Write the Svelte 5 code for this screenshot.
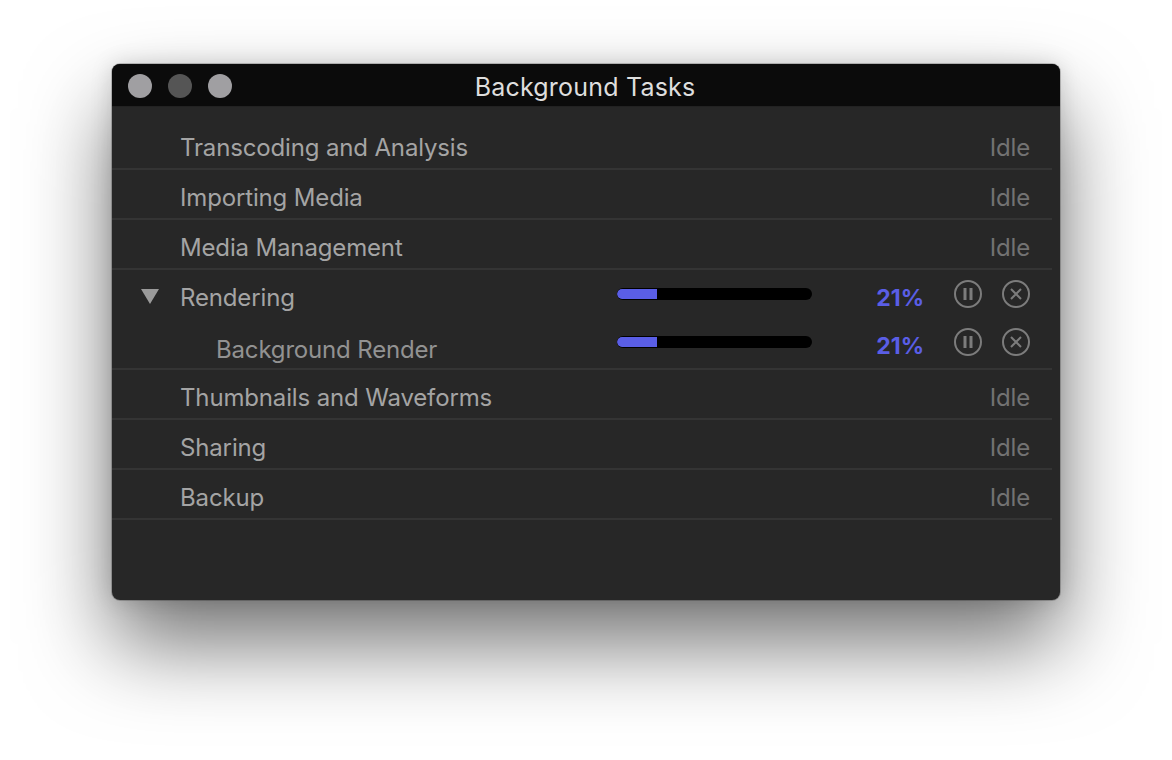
<script>
	const before = ['Transcoding and Analysis', 'Importing Media', 'Media Management'];
	const after = ['Thumbnails and Waveforms', 'Sharing', 'Backup'];
	const percent = 21;
</script>

{#snippet controls()}
	<div class="bar"><div class="fill" style="width: {percent * 1.9}px"></div></div>
	<span class="percent">{percent}%</span>
	<svg class="icon" viewBox="0 0 28 28" width="28" height="28">
		<circle cx="14" cy="14" r="13" fill="none" stroke="#7c7c7c" stroke-width="2" />
		<rect x="9.5" y="8" width="3" height="12" fill="#7c7c7c" />
		<rect x="15.5" y="8" width="3" height="12" fill="#7c7c7c" />
	</svg>
	<svg class="icon" viewBox="0 0 28 28" width="28" height="28">
		<circle cx="14" cy="14" r="13" fill="none" stroke="#7c7c7c" stroke-width="2" />
		<path d="M9 9 L19 19 M19 9 L9 19" stroke="#7c7c7c" stroke-width="2" fill="none" />
	</svg>
{/snippet}

{#snippet idleRow(label)}
	<div class="row">
		<span class="label">{label}</span>
		<span class="idle">Idle</span>
	</div>
{/snippet}

<div class="page">
	<div class="window">
		<div class="titlebar">
			<div class="lights">
				<span class="light"></span>
				<span class="light dim"></span>
				<span class="light"></span>
			</div>
			<div class="title">Background Tasks</div>
		</div>
		<div class="list">
			{#each before as label}
				{@render idleRow(label)}
			{/each}
			<div class="group">
				<div class="sub first">
					<span class="triangle"></span>
					<span class="label">Rendering</span>
					<div class="controls">{@render controls()}</div>
				</div>
				<div class="sub second">
					<span class="label child">Background Render</span>
					<div class="controls">{@render controls()}</div>
				</div>
			</div>
			{#each after as label}
				{@render idleRow(label)}
			{/each}
		</div>
	</div>
</div>

<style>
	:global(body) {
		background: #fff;
		overflow: hidden;
	}

	.page {
		height: 760px;
		padding: 64px 0 0 112px;
		box-sizing: border-box;
		font-family: Inter, "Liberation Sans", sans-serif;
	}

	.window {
		width: 948px;
		height: 536px;
		background: #272727;
		border-radius: 8px;
		overflow: hidden;
		box-shadow: 0 0 0 1px rgba(0, 0, 0, 0.2), 0 44px 85px rgba(0, 0, 0, 0.55), 0 0 22px rgba(0, 0, 0, 0.15);
	}

	.titlebar {
		height: 43px;
		background: #0b0b0b;
		display: flex;
		align-items: center;
		justify-content: center;
		position: relative;
		border-bottom: 1px solid #222;
		box-sizing: border-box;
		padding: 4px 2px 0 0;
	}

	.lights {
		position: absolute;
		left: 16px;
		top: 10px;
		display: flex;
		gap: 16px;
	}

	.light {
		width: 24px;
		height: 24px;
		border-radius: 50%;
		background: #a09fa2;
	}

	.light.dim {
		background: #555;
	}

	.title {
		color: #dedede;
		font-size: 25px;
		letter-spacing: 0.2px;
		line-height: 30px;
	}

	.list {
		padding-top: 13px;
		width: 940px;
	}

	.row {
		height: 50px;
		box-sizing: border-box;
		border-bottom: 2px solid #343434;
		display: flex;
		align-items: center;
		justify-content: space-between;
		padding: 0 22px 0 68px;
	}

	.label {
		color: #a4a4a4;
		font-size: 24px;
		letter-spacing: -0.15px;
		padding-top: 6px;
	}

	.idle {
		color: #727272;
		font-size: 24px;
		letter-spacing: -0.19px;
		padding-top: 6px;
	}

	.group {
		height: 100px;
		box-sizing: border-box;
		border-bottom: 2px solid #343434;
	}

	.sub {
		height: 49px;
		display: flex;
		align-items: center;
		padding: 0 22px 0 29px;
	}

	.triangle {
		width: 0;
		height: 0;
		margin-right: 21px;
		align-self: flex-start;
		margin-top: 19px;
		border-left: 9px solid transparent;
		border-right: 9px solid transparent;
		border-top: 15px solid #9a9a9a;
	}

	.second {
		padding-left: 104px;
	}

	.child {
		color: #929292;
		letter-spacing: -0.17px;
		padding-top: 12px;
	}

	.controls {
		margin-left: auto;
		align-self: flex-start;
		margin-top: 10px;
		height: 28px;
		display: flex;
		align-items: center;
		gap: 20px;
	}

	.second .controls {
		margin-top: 9px;
	}

	.bar {
		width: 195px;
		height: 12px;
		background: #000;
		border-radius: 6px;
		overflow: hidden;
		margin-right: 32px;
		padding: 1px 0;
		box-sizing: border-box;
	}

	.fill {
		height: 100%;
		background: #5a5ee6;
		border-radius: 5px 0 0 5px;
	}

	.percent {
		width: 60px;
		height: 28px;
		line-height: 36px;
		text-align: right;
		color: #5a5ee6;
		font-size: 23px;
		font-weight: 700;
		margin-right: 10px;
	}
</style>
